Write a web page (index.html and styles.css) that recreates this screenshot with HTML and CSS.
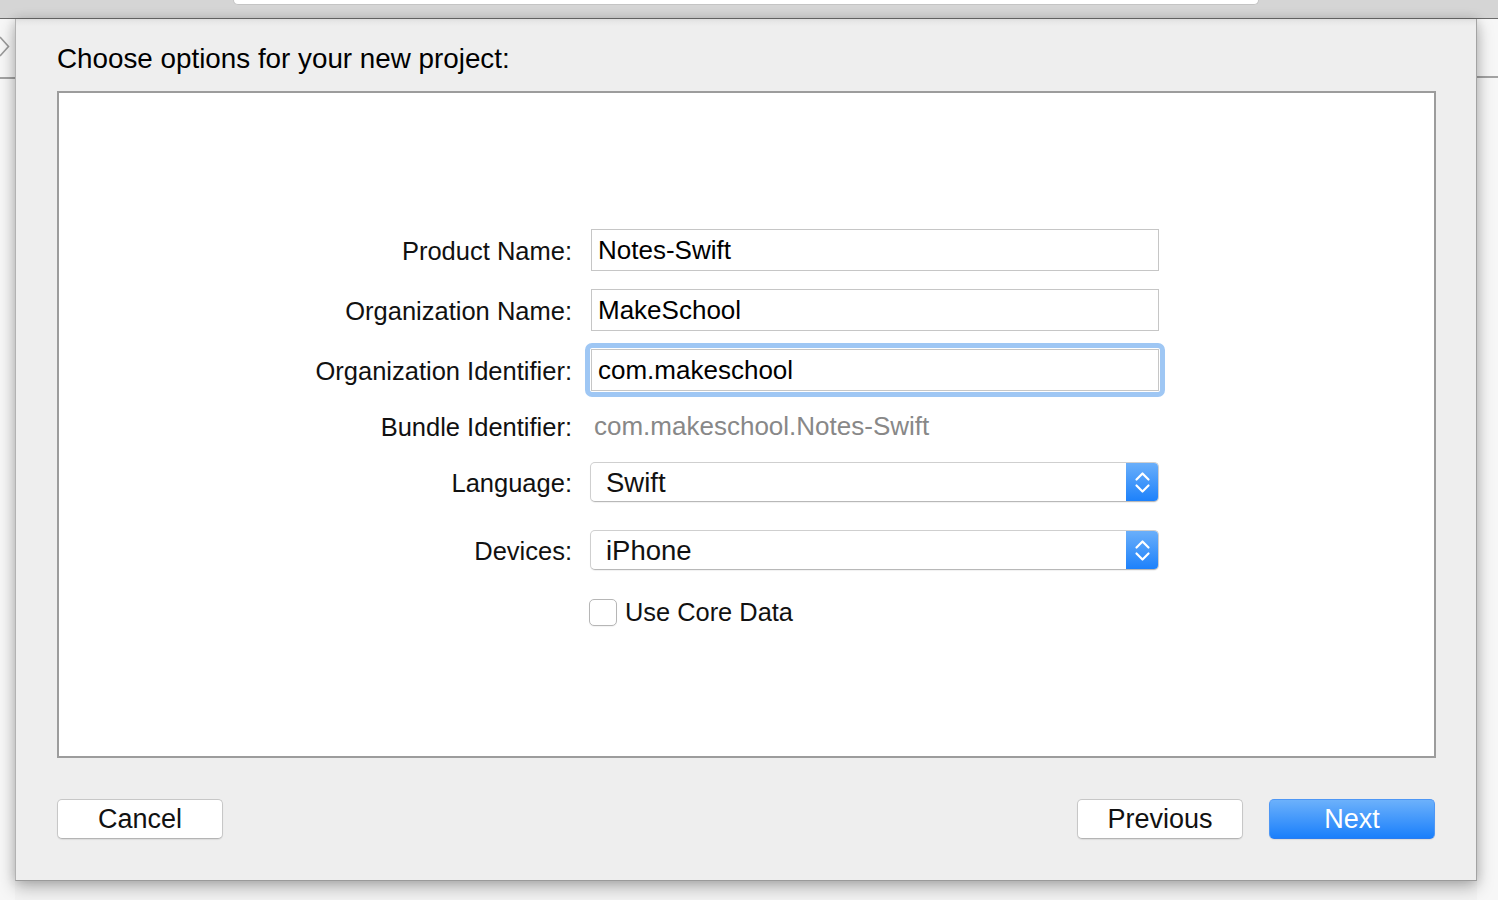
FILE: index.html
```html
<!DOCTYPE html>
<html>
<head>
<meta charset="utf-8">
<link rel="stylesheet" href="styles.css">
</head>
<body>
<div class="topbar"><div class="search"></div></div>
<div class="stage">
  <div class="gutter gutter-left">
    <svg class="chev" width="15" height="58" viewBox="0 0 15 58"><polyline points="0,18 8.5,27.5 0,37" fill="none" stroke="#9a9a9a" stroke-width="1.6"/></svg>
    <div class="hline"></div>
  </div>
  <div class="sheet">
    <h1 class="title">Choose options for your new project:</h1>
    <div class="panel">
      <div class="form">
        <div class="row">
          <div class="label">Product Name:</div>
          <div class="field">Notes-Swift</div>
        </div>
        <div class="row">
          <div class="label">Organization Name:</div>
          <div class="field">MakeSchool</div>
        </div>
        <div class="row">
          <div class="label">Organization Identifier:</div>
          <div class="field field-focus">com.makeschool</div>
        </div>
        <div class="row row-bundle">
          <div class="label">Bundle Identifier:</div>
          <div class="value">com.makeschool.Notes-Swift</div>
        </div>
        <div class="row">
          <div class="label">Language:</div>
          <div class="popup"><span class="popup-text">Swift</span><span class="popup-arrows"><svg width="33" height="40" viewBox="0 0 33 40"><polyline points="10.5,17.5 16.5,11.5 22.5,17.5" fill="none" stroke="#fff" stroke-width="2.2" stroke-linecap="round" stroke-linejoin="round"/><polyline points="10.5,23.5 16.5,29.5 22.5,23.5" fill="none" stroke="#fff" stroke-width="2.2" stroke-linecap="round" stroke-linejoin="round"/></svg></span></div>
        </div>
        <div class="row row-devices">
          <div class="label">Devices:</div>
          <div class="popup"><span class="popup-text">iPhone</span><span class="popup-arrows"><svg width="33" height="40" viewBox="0 0 33 40"><polyline points="10.5,17.5 16.5,11.5 22.5,17.5" fill="none" stroke="#fff" stroke-width="2.2" stroke-linecap="round" stroke-linejoin="round"/><polyline points="10.5,23.5 16.5,29.5 22.5,23.5" fill="none" stroke="#fff" stroke-width="2.2" stroke-linecap="round" stroke-linejoin="round"/></svg></span></div>
        </div>
        <div class="row row-check">
          <div class="label"></div>
          <label class="check"><span class="box"></span><span class="check-text">Use Core Data</span></label>
        </div>
      </div>
    </div>
    <div class="buttons">
      <div class="btn">Cancel</div>
      <div class="spacer"></div>
      <div class="btn">Previous</div>
      <div class="btn btn-primary">Next</div>
    </div>
  </div>
  <div class="gutter gutter-right">
    <div class="hline hline-right"></div>
  </div>
</div>
</body>
</html>
```

FILE: styles.css
```css
* { box-sizing: border-box; }
html, body {
  margin: 0;
  padding: 0;
}
body {
  width: 1498px;
  height: 900px;
  overflow: hidden;
  background: #f4f4f4;
  font-family: "Liberation Sans", Arial, sans-serif;
  color: #111;
}
.topbar {
  height: 19px;
  background: #d5d5d5;
  border-bottom: 1px solid #6c6c6c;
  display: flex;
}
.search {
  margin-left: 233px;
  width: 1026px;
  height: 5px;
  background: #fff;
  border: 1px solid #c4c4c4;
  border-top: none;
  border-radius: 0 0 6px 6px;
}
.stage {
  display: flex;
  height: 881px;
  background: #f3f3f3;
}
.gutter {
  width: 15px;
  display: flex;
  flex-direction: column;
  background: #f7f7f7;
}
.gutter-right {
  width: 21px;
}
.chev { display: block; }
.hline {
  height: 2px;
  background: #a3a3a3;
}
.hline-right {
  margin-top: 57px;
}
.sheet {
  position: relative;
  z-index: 1;
  width: 1462px;
  height: 862px;
  background: linear-gradient(#dedede 0px, #e8e8e8 3px, #eeeeee 7px, #eeeeee 100%);
  border-left: 1px solid #b2b2b2;
  border-right: 1px solid #a3a3a3;
  border-bottom: 1px solid #9a9a9a;
  box-shadow: 0 6px 16px rgba(0,0,0,0.28), 0 0 10px rgba(0,0,0,0.12);
  padding: 24px 41px 0 41px;
}
.title {
  margin: 0;
  font-size: 27.8px;
  line-height: 32px;
  font-weight: normal;
  color: #000;
}
.panel {
  margin-top: 16px;
  height: 667px;
  width: 1379px;
  background: #fff;
  border: 2px solid #9c9c9c;
}
.form {
  padding-top: 127px;
  display: flex;
  flex-direction: column;
}
.row {
  display: grid;
  grid-template-columns: 513px 568px;
  column-gap: 19px;
  align-items: center;
  height: 60px;
}
.row-bundle { height: 52px; }
.row-devices { margin-top: 8px; }
.row-check { margin-top: 2px; }
.label {
  text-align: right;
  font-size: 25.5px;
  line-height: 32px;
  padding-top: 2px;
  color: #111;
  white-space: nowrap;
}
.field {
  position: relative;
  height: 42px;
  border: 1px solid #c6c6c6;
  background: #fff;
  padding-left: 6px;
  font-size: 26px;
  line-height: 41px;
  color: #000;
}
.field-focus::after {
  content: "";
  position: absolute;
  left: -7px;
  top: -7px;
  right: -7px;
  bottom: -7px;
  border: 5px solid #9fc7f4;
  border-radius: 7px;
}
.value {
  padding-left: 3px;
  font-size: 26px;
  color: #888;
  line-height: 30px;
}
.popup {
  margin-left: -1px;
  height: 40px;
  display: flex;
  background: #fff;
  border: 1px solid #cfcfcf;
  border-bottom-color: #b8b8b8;
  border-radius: 5px;
  box-shadow: 0 1px 1px rgba(0,0,0,0.06);
  overflow: hidden;
}
.popup-text {
  flex: 1;
  padding-left: 15px;
  font-size: 27.5px;
  line-height: 39px;
  color: #111;
}
.popup-arrows {
  width: 33px;
  margin: -1px -1px -1px 0;
  height: 40px;
  background: linear-gradient(#6cb0fa, #1b80fb);
  border-radius: 0 5px 5px 0;
}
.popup-arrows svg { display: block; }
.check {
  display: flex;
  align-items: center;
  margin-left: -2px;
}
.box {
  width: 28px;
  height: 27px;
  border: 1px solid #b6b6b6;
  border-radius: 5px;
  background: #fff;
  box-shadow: 0 1px 1px rgba(0,0,0,0.05);
}
.check-text {
  margin-left: 8px;
  font-size: 25.4px;
  color: #111;
}
.buttons {
  margin-top: 41px;
  width: 1378px;
  display: flex;
  gap: 26px;
}
.spacer { flex: 1; }
.btn {
  width: 166px;
  height: 40px;
  border: 1px solid #c7c7c7;
  border-bottom-color: #b4b4b4;
  border-radius: 5px;
  background: #fff;
  box-shadow: 0 1px 1px rgba(0,0,0,0.08);
  text-align: center;
  font-size: 27px;
  line-height: 38px;
  color: #111;
}
.btn-primary {
  background: linear-gradient(#6cb1fb, #1a7ffb);
  border-color: #4e97f5;
  border-bottom-color: #2b7cf0;
  color: #fff;
}
```
